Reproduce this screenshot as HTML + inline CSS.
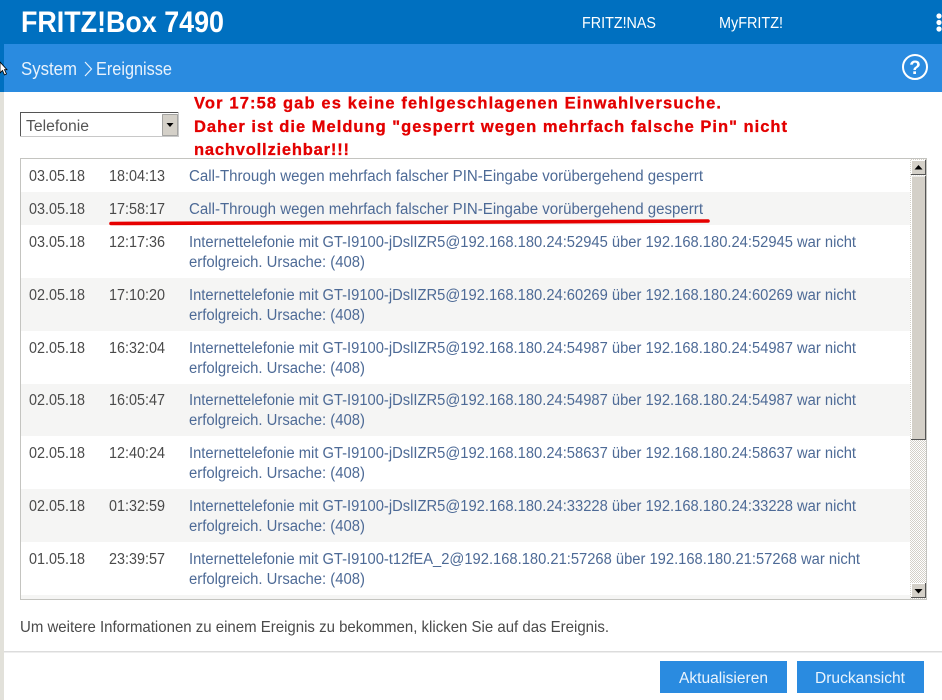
<!DOCTYPE html>
<html lang="de"><head><meta charset="utf-8"><title>FRITZ!Box 7490</title>
<style>
html,body{margin:0;padding:0;background:#fff;overflow:hidden}
svg{display:block}
text{font-family:"Liberation Sans",Arial,sans-serif}
.d{font-size:15.5px;fill:#4a4a4a}
.m{font-size:15.5px;fill:#4d6a96}
.r{font-size:16.5px;font-weight:bold;fill:#e30000;stroke:#e30000;stroke-width:.3px}
.w{fill:#fff;font-size:15.5px}
</style></head><body>
<svg width="942" height="700" viewBox="0 0 942 700" xmlns="http://www.w3.org/2000/svg">
<defs>
<pattern id="ck" width="2" height="2" patternUnits="userSpaceOnUse"><rect width="2" height="2" fill="#fff"/><rect width="1" height="1" fill="#d4d0c8"/><rect x="1" y="1" width="1" height="1" fill="#d4d0c8"/></pattern>
</defs>
<rect width="942" height="700" fill="#fff"/>
<rect x="0" y="92" width="4" height="608" fill="#e2e1da"/>
<rect x="0" y="0" width="942" height="44" fill="#0070c0"/>
<rect x="0" y="44" width="4" height="48" fill="#0070c0"/>
<rect x="4" y="44" width="938" height="48" fill="#2a8be0"/>

<text x="21" y="32" fill="#fff" style="font-size:29.500px;font-weight:bold" textLength="203" lengthAdjust="spacingAndGlyphs">FRITZ!Box 7490</text>
<text x="582" y="28" class="w" textLength="74" lengthAdjust="spacingAndGlyphs">FRITZ!NAS</text>
<text x="719" y="28" class="w" textLength="64" lengthAdjust="spacingAndGlyphs">MyFRITZ!</text>
<circle cx="939" cy="16" r="2.600" fill="#fff"/><circle cx="939" cy="22.500" r="2.600" fill="#fff"/><circle cx="939" cy="29" r="2.600" fill="#fff"/>

<path d="M0 62l0 11 2.500-2.500 2 4.500 2-1-2-4.300 2.500 0z" fill="#fff" stroke="#000" stroke-width=".8"/>
<text x="21" y="75" fill="#e8f2fc" style="font-size:18.500px" textLength="56" lengthAdjust="spacingAndGlyphs">System</text>
<path d="M85 62l6.500 7-6.500 7" fill="none" stroke="#e8f2fc" stroke-width="1.200"/>
<text x="96" y="75" fill="#e8f2fc" style="font-size:18.500px" textLength="76" lengthAdjust="spacingAndGlyphs">Ereignisse</text>
<circle cx="915" cy="67" r="12" fill="none" stroke="#fff" stroke-width="2"/>
<text x="915" y="74" fill="#fff" text-anchor="middle" style="font-size:19px;font-weight:bold">?</text>

<rect x="20.500" y="112.500" width="158" height="24" fill="#fff" stroke="#c8c8c8"/>
<path d="M20.500 136V112.500H178" fill="none" stroke="#555"/>
<rect x="162.500" y="114.500" width="15" height="21" fill="#d4d0c8" stroke="#777" stroke-width=".6"/>
<path d="M166.500 123h7l-3.500 4z" fill="#000"/>
<text x="26" y="131" style="font-size:15.500px;fill:#555" textLength="63" lengthAdjust="spacingAndGlyphs">Telefonie</text>

<text x="194" y="108.500" class="r" textLength="527" lengthAdjust="spacing">Vor 17:58 gab es keine fehlgeschlagenen Einwahlversuche.</text>
<text x="194" y="132" class="r" textLength="593" lengthAdjust="spacing">Daher ist die Meldung "gesperrt wegen mehrfach falsche Pin" nicht</text>
<text x="194" y="155" class="r" textLength="155" lengthAdjust="spacing">nachvollziehbar!!!</text>

<rect x="20.500" y="158.500" width="906" height="441" fill="#fff" stroke="#c4c4c0"/>
<rect x="21" y="192" width="890" height="33" fill="#f5f5f4"/>
<rect x="21" y="278" width="890" height="53" fill="#f5f5f4"/>
<rect x="21" y="384" width="890" height="52" fill="#f5f5f4"/>
<rect x="21" y="489" width="890" height="53" fill="#f5f5f4"/>
<rect x="21" y="595" width="890" height="4" fill="#f5f5f4"/>

<g>
<text x="29" y="181" class="d" textLength="56" lengthAdjust="spacingAndGlyphs">03.05.18</text><text x="109" y="181" class="d" textLength="56" lengthAdjust="spacingAndGlyphs">18:04:13</text>
<text x="189" y="181" class="m" textLength="514" lengthAdjust="spacingAndGlyphs">Call-Through wegen mehrfach falscher PIN-Eingabe vorübergehend gesperrt</text>

<text x="29" y="214" class="d" textLength="56" lengthAdjust="spacingAndGlyphs">03.05.18</text><text x="109" y="214" class="d" textLength="56" lengthAdjust="spacingAndGlyphs">17:58:17</text>
<text x="189" y="214" class="m" textLength="514" lengthAdjust="spacingAndGlyphs">Call-Through wegen mehrfach falscher PIN-Eingabe vorübergehend gesperrt</text>

<text x="29" y="247" class="d" textLength="56" lengthAdjust="spacingAndGlyphs">03.05.18</text><text x="109" y="247" class="d" textLength="56" lengthAdjust="spacingAndGlyphs">12:17:36</text>
<text x="189" y="247" class="m" textLength="667" lengthAdjust="spacingAndGlyphs">Internettelefonie mit GT-I9100-jDslIZR5@192.168.180.24:52945 über 192.168.180.24:52945 war nicht</text>
<text x="189" y="267" class="m" textLength="176" lengthAdjust="spacingAndGlyphs">erfolgreich. Ursache: (408)</text>

<text x="29" y="300" class="d" textLength="56" lengthAdjust="spacingAndGlyphs">02.05.18</text><text x="109" y="300" class="d" textLength="56" lengthAdjust="spacingAndGlyphs">17:10:20</text>
<text x="189" y="300" class="m" textLength="667" lengthAdjust="spacingAndGlyphs">Internettelefonie mit GT-I9100-jDslIZR5@192.168.180.24:60269 über 192.168.180.24:60269 war nicht</text>
<text x="189" y="320" class="m" textLength="176" lengthAdjust="spacingAndGlyphs">erfolgreich. Ursache: (408)</text>

<text x="29" y="353" class="d" textLength="56" lengthAdjust="spacingAndGlyphs">02.05.18</text><text x="109" y="353" class="d" textLength="56" lengthAdjust="spacingAndGlyphs">16:32:04</text>
<text x="189" y="353" class="m" textLength="667" lengthAdjust="spacingAndGlyphs">Internettelefonie mit GT-I9100-jDslIZR5@192.168.180.24:54987 über 192.168.180.24:54987 war nicht</text>
<text x="189" y="373" class="m" textLength="176" lengthAdjust="spacingAndGlyphs">erfolgreich. Ursache: (408)</text>

<text x="29" y="405" class="d" textLength="56" lengthAdjust="spacingAndGlyphs">02.05.18</text><text x="109" y="405" class="d" textLength="56" lengthAdjust="spacingAndGlyphs">16:05:47</text>
<text x="189" y="405" class="m" textLength="667" lengthAdjust="spacingAndGlyphs">Internettelefonie mit GT-I9100-jDslIZR5@192.168.180.24:54987 über 192.168.180.24:54987 war nicht</text>
<text x="189" y="425" class="m" textLength="176" lengthAdjust="spacingAndGlyphs">erfolgreich. Ursache: (408)</text>

<text x="29" y="458" class="d" textLength="56" lengthAdjust="spacingAndGlyphs">02.05.18</text><text x="109" y="458" class="d" textLength="56" lengthAdjust="spacingAndGlyphs">12:40:24</text>
<text x="189" y="458" class="m" textLength="667" lengthAdjust="spacingAndGlyphs">Internettelefonie mit GT-I9100-jDslIZR5@192.168.180.24:58637 über 192.168.180.24:58637 war nicht</text>
<text x="189" y="478" class="m" textLength="176" lengthAdjust="spacingAndGlyphs">erfolgreich. Ursache: (408)</text>

<text x="29" y="511" class="d" textLength="56" lengthAdjust="spacingAndGlyphs">02.05.18</text><text x="109" y="511" class="d" textLength="56" lengthAdjust="spacingAndGlyphs">01:32:59</text>
<text x="189" y="511" class="m" textLength="667" lengthAdjust="spacingAndGlyphs">Internettelefonie mit GT-I9100-jDslIZR5@192.168.180.24:33228 über 192.168.180.24:33228 war nicht</text>
<text x="189" y="531" class="m" textLength="176" lengthAdjust="spacingAndGlyphs">erfolgreich. Ursache: (408)</text>

<text x="29" y="564" class="d" textLength="56" lengthAdjust="spacingAndGlyphs">01.05.18</text><text x="109" y="564" class="d" textLength="56" lengthAdjust="spacingAndGlyphs">23:39:57</text>
<text x="189" y="564" class="m" textLength="671" lengthAdjust="spacingAndGlyphs">Internettelefonie mit GT-I9100-t12fEA_2@192.168.180.21:57268 über 192.168.180.21:57268 war nicht</text>
<text x="189" y="584" class="m" textLength="176" lengthAdjust="spacingAndGlyphs">erfolgreich. Ursache: (408)</text>
</g>

<path d="M111 223.500C260 223 500 222 708 221" fill="none" stroke="#e60000" stroke-width="3.600" stroke-linecap="round"/>

<rect x="910" y="159" width="16" height="440" fill="url(#ck)"/>
<rect x="911" y="160" width="15" height="14" fill="#d4d0c8"/>
<path d="M911.500 174V160.500H925" fill="none" stroke="#fff"/><path d="M911 174.500H925.500V160" fill="none" stroke="#555"/>
<path d="M914.500 169.500h8l-4-4.500z" fill="#000"/>
<rect x="911" y="175.500" width="15" height="264" fill="#d4d0c8"/>
<path d="M911.500 439V176H925" fill="none" stroke="#fff"/><path d="M911 439.500H925.500V176" fill="none" stroke="#555"/>
<rect x="911" y="583" width="15" height="15" fill="#d4d0c8"/>
<path d="M911.500 597V583.500H925" fill="none" stroke="#fff"/><path d="M911 597.500H925.500V583" fill="none" stroke="#555"/>
<path d="M914.500 589h8l-4 4.500z" fill="#000"/>

<text x="20" y="632" style="font-size:16px;fill:#4a4a4a" textLength="589" lengthAdjust="spacingAndGlyphs">Um weitere Informationen zu einem Ereignis zu bekommen, klicken Sie auf das Ereignis.</text>

<rect x="4" y="651" width="938" height="1.500" fill="#dcdcdc"/>
<rect x="660" y="661" width="127" height="32" fill="#2a8be0"/>
<rect x="797" y="661" width="127" height="32" fill="#2a8be0"/>
<text x="679" y="683" fill="#eaf4fd" style="font-size:15.500px" textLength="89" lengthAdjust="spacingAndGlyphs">Aktualisieren</text>
<text x="815" y="683" fill="#eaf4fd" style="font-size:15.500px" textLength="90" lengthAdjust="spacingAndGlyphs">Druckansicht</text>
</svg>
</body></html>
